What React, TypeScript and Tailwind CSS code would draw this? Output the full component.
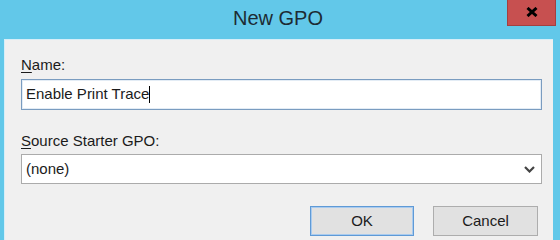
import React from 'react';

const font = { fontFamily: '"Liberation Sans", Arial, sans-serif' };

const CloseGlyph = () => (
  <svg width="12" height="10" viewBox="0 0 12 10">
    <path d="M1.5 1 L10.5 9 M10.5 1 L1.5 9" stroke="#000" strokeWidth="3" strokeLinecap="butt" />
  </svg>
);

const Chevron = () => (
  <svg width="11" height="7" viewBox="0 0 11 7">
    <path d="M1 1 L5.5 5.5 L10 1" fill="none" stroke="#444" strokeWidth="2.2" />
  </svg>
);

export default function App() {
  return (
    <div
      className="w-[560px] h-[240px] bg-[#62c8e9] flex flex-col overflow-hidden text-[#1b1b1b]"
      style={font}
    >
      {/* title bar */}
      <div className="h-[39px] grid grid-cols-[1fr_auto_1fr] items-start">
        <div />
        <div className="mt-[5px] pr-[4px] text-[20px] leading-[26px] text-[#1d2b33]">New GPO</div>
        <div className="justify-self-end mr-[4px]">
          <button className="w-[49px] h-[26px] bg-[#c75050] border border-t-0 border-[#a34040] flex items-center justify-center pb-[1px]">
            <CloseGlyph />
          </button>
        </div>
      </div>

      {/* body */}
      <div className="flex-1 ml-[4px] mr-[7px] bg-[#f0f0f0] border-t border-l border-[#d6eef8] pl-[16px] pr-[11px] pt-[16px] flex flex-col">
        <label className="text-[15px] leading-[18px]">
          <span className="underline underline-offset-[2px]">N</span>ame:
        </label>
        <div className="mt-[5px] h-[31px] bg-white border border-[#7a9cc0] shadow-[inset_0_0_0_1px_#e3ecf5] flex items-center pl-[4px] text-[15px]">
          <span>Enable Print Trace</span>
          <span className="w-px h-[17px] bg-black" />
        </div>

        <label className="mt-[22px] text-[15px] leading-[18px]">
          <span className="underline underline-offset-[2px]">S</span>ource Starter GPO:
        </label>
        <div className="mt-[4px] h-[30px] bg-white border border-[#ababab] flex items-center justify-between pl-[4px] pr-[6px] text-[15px]">
          <span>(none)</span>
          <Chevron />
        </div>

        <div className="mt-[22px] flex justify-end gap-[19px] pr-[4px]">
          <button className="w-[104px] h-[30px] bg-[#e1e1e1] border border-[#5f9ad6] shadow-[inset_0_0_0_1px_#a9cbef] text-[15px]">
            OK
          </button>
          <button className="w-[105px] h-[30px] bg-[#e1e1e1] border border-[#adadad] text-[15px]">
            Cancel
          </button>
        </div>
      </div>
    </div>
  );
}
